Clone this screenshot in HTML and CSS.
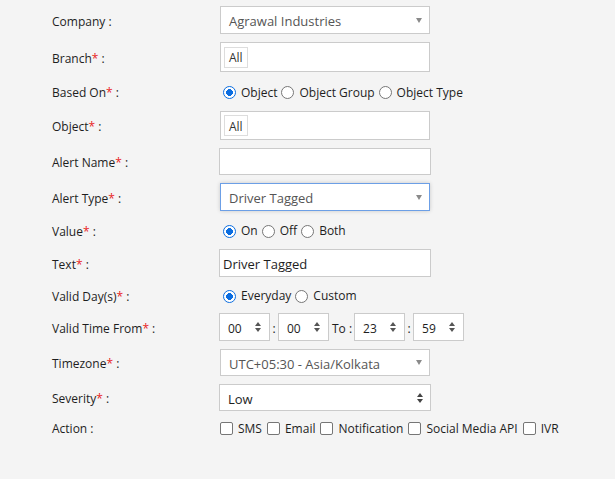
FILE: index.html
```html
<!DOCTYPE html>
<html>
<head>
<meta charset="utf-8">
<link rel="stylesheet" href="styles.css">
</head>
<body>
<div class="form">
  <div class="row h28">
    <div class="label">Company :</div>
    <div class="select"><span class="val muted">Agrawal Industries</span><span class="caret"></span></div>
  </div>
  <div class="row h30">
    <div class="label">Branch<span class="req">*</span> :</div>
    <div class="box"><span class="tag">All</span></div>
  </div>
  <div class="row h23 radios">
    <div class="label">Based On<span class="req">*</span> :</div>
    <div class="choices">
      <label class="opt"><span class="radio on"></span>Object</label>
      <label class="opt"><span class="radio"></span>Object Group</label>
      <label class="opt"><span class="radio"></span>Object Type</label>
    </div>
  </div>
  <div class="row h29">
    <div class="label">Object<span class="req">*</span> :</div>
    <div class="box"><span class="tag">All</span></div>
  </div>
  <div class="row h27">
    <div class="label">Alert Name<span class="req">*</span> :</div>
    <div class="input wide"></div>
  </div>
  <div class="row h28">
    <div class="label">Alert Type<span class="req">*</span> :</div>
    <div class="select focus"><span class="val muted">Driver Tagged</span><span class="caret"></span></div>
  </div>
  <div class="row h22 radios">
    <div class="label">Value<span class="req">*</span> :</div>
    <div class="choices">
      <label class="opt"><span class="radio on"></span>On</label>
      <label class="opt"><span class="radio"></span>Off</label>
      <label class="opt"><span class="radio"></span>Both</label>
    </div>
  </div>
  <div class="row h28">
    <div class="label">Text<span class="req">*</span> :</div>
    <div class="input wide"><span class="val">Driver Tagged</span></div>
  </div>
  <div class="row h20 radios">
    <div class="label">Valid Day(s)<span class="req">*</span> :</div>
    <div class="choices">
      <label class="opt"><span class="radio on"></span>Everyday</label>
      <label class="opt"><span class="radio"></span>Custom</label>
    </div>
  </div>
  <div class="row h28">
    <div class="label">Valid Time From<span class="req">*</span> :</div>
    <div class="times">
      <div class="num"><span class="val">00</span><span class="spin"><i class="up"></i><i class="down"></i></span></div>
      <span class="sep">:</span>
      <div class="num"><span class="val">00</span><span class="spin"><i class="up"></i><i class="down"></i></span></div>
      <span class="to">To :</span>
      <div class="num"><span class="val">23</span><span class="spin"><i class="up"></i><i class="down"></i></span></div>
      <span class="sep">:</span>
      <div class="num"><span class="val">59</span><span class="spin"><i class="up"></i><i class="down"></i></span></div>
    </div>
  </div>
  <div class="row h27">
    <div class="label">Timezone<span class="req">*</span> :</div>
    <div class="select"><span class="val muted">UTC+05:30 - Asia/Kolkata</span><span class="caret"></span></div>
  </div>
  <div class="row h27">
    <div class="label">Severity<span class="req">*</span> :</div>
    <div class="select wide"><span class="val">Low</span><span class="spin dark"><i class="up"></i><i class="down"></i></span></div>
  </div>
  <div class="row h19 actions">
    <div class="label">Action :</div>
    <div class="choices checks">
      <label class="opt"><span class="check"></span>SMS</label>
      <label class="opt"><span class="check"></span>Email</label>
      <label class="opt"><span class="check"></span>Notification</label>
      <label class="opt"><span class="check"></span>Social Media API</label>
      <label class="opt"><span class="check"></span>IVR</label>
    </div>
  </div>
</div>
</body>
</html>
```
FILE: styles.css
```css
html, body {
  margin: 0;
  padding: 0;
  background: #f4f4f4;
}
body {
  font-family: "Open Sans", "Noto Sans", sans-serif;
  color: #1e1e1e;
  font-size: 12px;
}
.form {
  padding: 6px 0 0 52px;
  display: flex;
  flex-direction: column;
  gap: 8px;
}
.row {
  display: flex;
  align-items: center;
}
.h19 { height: 19px; }
.h20 { height: 20px; }
.h22 { height: 22px; }
.h23 { height: 23px; }
.h27 { height: 27px; }
.h28 { height: 28px; }
.h29 { height: 29px; }
.h30 { height: 30px; }
.label {
  width: 168px;
  flex: none;
  font-size: 12px;
  color: #1e1e1e;
  padding-top: 2px;
}
.radios .label { padding-top: 2px; }
.actions .label { padding-top: 0; }
.req { color: #e8231e; }
.select, .box, .input {
  box-sizing: border-box;
  width: 210px;
  height: 100%;
  background: #fff;
  border: 1px solid #cbcbcb;
  display: flex;
  align-items: center;
  font-size: 13px;
}
.wide {
  width: 212px;
  margin-left: -1px;
}
.select {
  padding: 0 7px 0 8px;
  justify-content: space-between;
}
.select.focus {
  border-color: #6c9fe6;
  box-shadow: 0 0 4px rgba(0, 0, 0, 0.18);
}
.val {
  color: #1e1e1e;
  padding-top: 2px;
}
.val.muted { color: #555; }
.caret {
  width: 0;
  height: 0;
  border-left: 3.5px solid transparent;
  border-right: 3.5px solid transparent;
  border-top: 5px solid #8a8a8a;
}
.box {
  padding: 0 3px;
}
.tag {
  box-sizing: border-box;
  height: 21px;
  padding: 1px 4px 0;
  border: 1px solid #ddd;
  display: flex;
  align-items: center;
  font-size: 12px;
  color: #333;
}
.input {
  padding: 0 3px;
}
.choices {
  display: flex;
  align-items: center;
  margin-left: 3px;
}
.opt {
  display: flex;
  align-items: center;
  font-size: 12px;
  color: #1e1e1e;
  margin-right: 4px;
  line-height: 16px;
}
.radios .opt { padding-top: 2px; }
.radio {
  box-sizing: border-box;
  width: 13px;
  height: 13px;
  border-radius: 50%;
  border: 1px solid #767676;
  background: #fff;
  margin-right: 5px;
  flex: none;
}
.radio.on {
  border: 1.5px solid #0b6de0;
  background: radial-gradient(circle, #0b6de0 0 3.3px, #fff 3.6px);
}
.checks { margin-left: 0; }
.checks .opt { margin-right: 5px; }
.check {
  box-sizing: border-box;
  width: 13px;
  height: 13px;
  border-radius: 2px;
  border: 1px solid #767676;
  background: #fff;
  margin-right: 5px;
  flex: none;
}
.times {
  display: flex;
  align-items: center;
  height: 100%;
  margin-left: -1px;
}
.num {
  box-sizing: border-box;
  width: 51px;
  height: 100%;
  background: #fff;
  border: 1px solid #cbcbcb;
  display: flex;
  align-items: center;
  justify-content: space-between;
  padding: 0 8px 0 8px;
  font-size: 12px;
}
.sep {
  width: 8px;
  text-align: center;
  font-size: 12px;
  padding-top: 2px;
}
.to {
  margin: 0 2px 0 3px;
  font-size: 12px;
  padding-top: 2px;
}
.spin {
  display: flex;
  flex-direction: column;
  align-items: center;
  gap: 2px;
}
.spin i {
  display: block;
  width: 0;
  height: 0;
  border-left: 3px solid transparent;
  border-right: 3px solid transparent;
}
.spin .up { border-bottom: 4px solid #555; }
.spin .down { border-top: 4px solid #555; }
.spin.dark .up { border-bottom-color: #444; }
.spin.dark .down { border-top-color: #444; }
```
